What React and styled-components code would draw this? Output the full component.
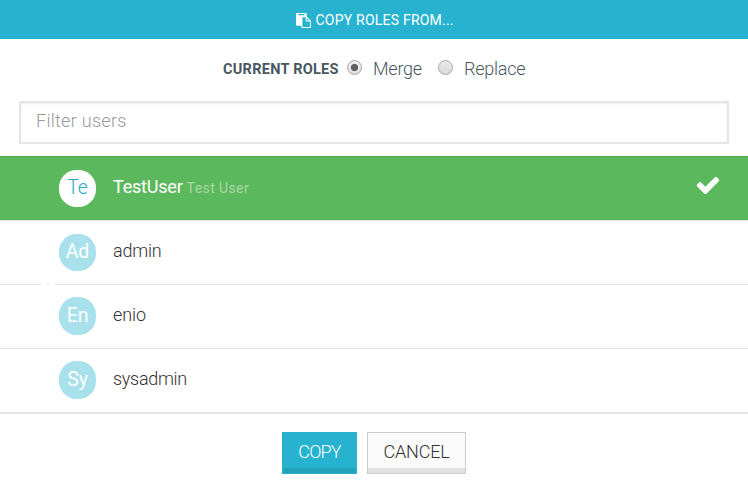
import React, { useState } from 'react';
import styled, { createGlobalStyle } from 'styled-components';

const GlobalStyle = createGlobalStyle`
  * { box-sizing: border-box; }
  body { margin: 0; background: #fff; font-family: Roboto, "Liberation Sans", sans-serif; }
`;

const Dialog = styled.main`
  width: 748px;
  height: 493px;
  overflow: hidden;
  background: #fff;
  color: #333;
`;

const Header = styled.header`
  height: 39px;
  display: flex;
  align-items: center;
  justify-content: center;
  gap: 5px;
  padding: 1px 0 0 1px;
  background: #27b3cf;
  color: #fff;
`;

const Title = styled.h1`
  margin: 0;
  width: 138px;
  font-size: 14px;
  line-height: 20px;
  font-weight: 400;
  letter-spacing: 0.22px;
  white-space: nowrap;
`;

const Icon = styled.svg`
  display: block;
  flex: none;
  width: ${(p) => p.$size}px;
  height: ${(p) => p.$size}px;
  fill: currentColor;
`;

const ModeBar = styled.div`
  height: 62px;
  padding: 1px 0 4px 223px;
  display: flex;
  align-items: center;
  color: #475760;
`;

const ModeLabel = styled.strong`
  width: 124px;
  padding-top: 2px;
  font-size: 14.5px;
  font-weight: 700;
  letter-spacing: 0.27px;
  white-space: nowrap;
`;

const Option = styled.label`
  display: flex;
  align-items: center;
  width: 91px;
  gap: 11px;
  font-size: 18px;
  font-weight: 300;
  letter-spacing: -0.25px;
  white-space: nowrap;
`;

const Radio = styled.input`
  appearance: none;
  flex: none;
  width: 15px;
  height: 15px;
  margin: 0 0 3px;
  border: 1px solid #a9a9a9;
  border-radius: 50%;
  background: linear-gradient(#e9e9e9, #d9d9d9);
  &:checked {
    background: radial-gradient(circle, #606060 0 3.2px, transparent 4px), linear-gradient(#eee, #ddd);
  }
`;

const Filter = styled.input`
  display: block;
  width: 710px;
  height: 43px;
  margin: 0 19px 12px;
  padding: 0 15px 4px;
  border: 2px solid #e5e5e5;
  border-radius: 0;
  outline: none;
  box-shadow: inset 0 1px 2px rgba(0, 0, 0, 0.08);
  font: 300 18px Roboto, sans-serif;
  letter-spacing: 0.28px;
  color: #333;
  &::placeholder { color: #999; opacity: 1; }
`;

const UserList = styled.ul`
  margin: 0;
  padding: 0;
  list-style: none;
  border-bottom: 2px solid #e5e5e5;
`;

const notchedRule = 'linear-gradient(90deg, #e5e5e5 41px, #fff 41px 46px, #e5e5e5 46px 49px, #fff 49px 54px, #e5e5e5 54px)';

const UserRow = styled.li`
  height: 64px;
  display: flex;
  align-items: flex-start;
  padding: 0 27px 0 59px;
  background: ${(p) => (p.$selected ? '#5cb85c' : '#fff')};
  color: ${(p) => (p.$selected ? '#fff' : '#333')};
  background-image: ${(p) => (p.$selected ? 'linear-gradient(#4fa950, #4fa950)' : p.$notched ? notchedRule : 'linear-gradient(#e5e5e5, #e5e5e5)')};
  background-size: 100% 1px;
  background-repeat: no-repeat;
`;

const Avatar = styled.span`
  width: 37px;
  height: ${(p) => (p.$tall ? 38 : 37)}px;
  margin-top: ${(p) => (p.$tall ? 13 : 14)}px;
  padding-bottom: 1px;
  border-radius: 17.5px;
  display: flex;
  align-items: center;
  justify-content: center;
  font-size: 19.5px;
  line-height: 24px;
  letter-spacing: -0.2px;
  font-weight: ${(p) => (p.$selected ? 300 : 400)};
  background: ${(p) => (p.$selected ? '#fff' : '#a8e1ec')};
  color: ${(p) => (p.$selected ? '#27a9c5' : '#fff')};
`;

const UserName = styled.span`
  flex: 1;
  margin: 20px 0 0 17px;
  line-height: 22px;
  font-size: 18px;
  font-weight: ${(p) => (p.$selected ? 400 : 300)};
  letter-spacing: ${(p) => p.$spacing}px;
`;

const FullName = styled.small`
  margin-left: 4px;
  font-size: 14px;
  letter-spacing: 0.4px;
  color: #a6d8a6;
`;

const CheckSlot = styled.span`
  margin-top: 16px;
`;

const Actions = styled.footer`
  display: flex;
  justify-content: center;
  gap: 10px;
  padding-top: 18px;
`;

const Button = styled.button`
  width: ${(p) => (p.$primary ? 75 : 99)}px;
  height: 42px;
  padding: 0 0 3px;
  border: 1px solid ${(p) => (p.$primary ? '#27b3cf' : '#ccc')};
  border-radius: 0;
  background: ${(p) => (p.$primary ? '#27b3cf' : '#fafafa')};
  box-shadow: inset 0 -5px ${(p) => (p.$primary ? '#23a1ba' : '#e1e1e1')};
  color: ${(p) => (p.$primary ? '#fff' : '#333')};
  font: 300 18px Roboto, sans-serif;
  letter-spacing: ${(p) => (p.$primary ? -0.85 : -0.2)}px;
`;

const users = [
  { name: 'TestUser', full: 'Test User', initials: 'Te', spacing: -0.2 },
  { name: 'admin', initials: 'Ad', spacing: -0.2 },
  { name: 'enio', initials: 'En', notched: true, tall: true, spacing: -0.1 },
  { name: 'sysadmin', initials: 'Sy', tall: true, spacing: -0.3 },
];

function PasteIcon() {
  return (
    <Icon $size={15} viewBox="0 0 1792 1792" aria-hidden="true">
      <path d="M768 1664h896v-640h-416q-40 0-68-28t-28-68v-416h-384v1152zm256-1440v-64q0-13-9.5-22.5t-22.5-9.5h-704q-13 0-22.5 9.5t-9.5 22.5v64q0 13 9.5 22.5t22.5 9.5h704q13 0 22.5-9.5t9.5-22.5zm256 672h299l-299-299v299zm512 128v672q0 40-28 68t-68 28h-960q-40 0-68-28t-28-68v-160h-544q-40 0-68-28t-28-68v-1344q0-40 28-68t68-28h1088q40 0 68 28t28 68v328q21 13 36 28l408 408q28 28 48 76t20 88z" />
    </Icon>
  );
}

function CheckIcon() {
  return (
    <Icon $size={26} viewBox="0 0 1792 1792" aria-hidden="true">
      <path d="M1671 566q0 40-28 68l-724 724-136 136q-28 28-68 28t-68-28l-136-136-362-362q-28-28-28-68t28-68l136-136q28-28 68-28t68 28l294 295 656-657q28-28 68-28t68 28l136 136q28 28 28 68z" />
    </Icon>
  );
}

export default function App() {
  const [mode, setMode] = useState('Merge');
  const [selected, setSelected] = useState('TestUser');
  return (
    <>
      <GlobalStyle />
      <Dialog>
        <Header><PasteIcon /><Title>COPY ROLES FROM...</Title></Header>
        <ModeBar>
          <ModeLabel>CURRENT ROLES</ModeLabel>
          {['Merge', 'Replace'].map((m) => (
            <Option key={m}>
              <Radio type="radio" name="mode" checked={mode === m} onChange={() => setMode(m)} />
              {m}
            </Option>
          ))}
        </ModeBar>
        <Filter placeholder="Filter users" />
        <UserList>
          {users.map((u) => {
            const on = selected === u.name;
            return (
              <UserRow key={u.name} $selected={on} $notched={u.notched} onClick={() => setSelected(u.name)}>
                <Avatar $selected={on} $tall={u.tall}>{u.initials}</Avatar>
                <UserName $selected={on} $spacing={u.spacing}>
                  {u.name}
                  {u.full && <FullName>{u.full}</FullName>}
                </UserName>
                {on && <CheckSlot><CheckIcon /></CheckSlot>}
              </UserRow>
            );
          })}
        </UserList>
        <Actions>
          <Button $primary>COPY</Button>
          <Button>CANCEL</Button>
        </Actions>
      </Dialog>
    </>
  );
}
